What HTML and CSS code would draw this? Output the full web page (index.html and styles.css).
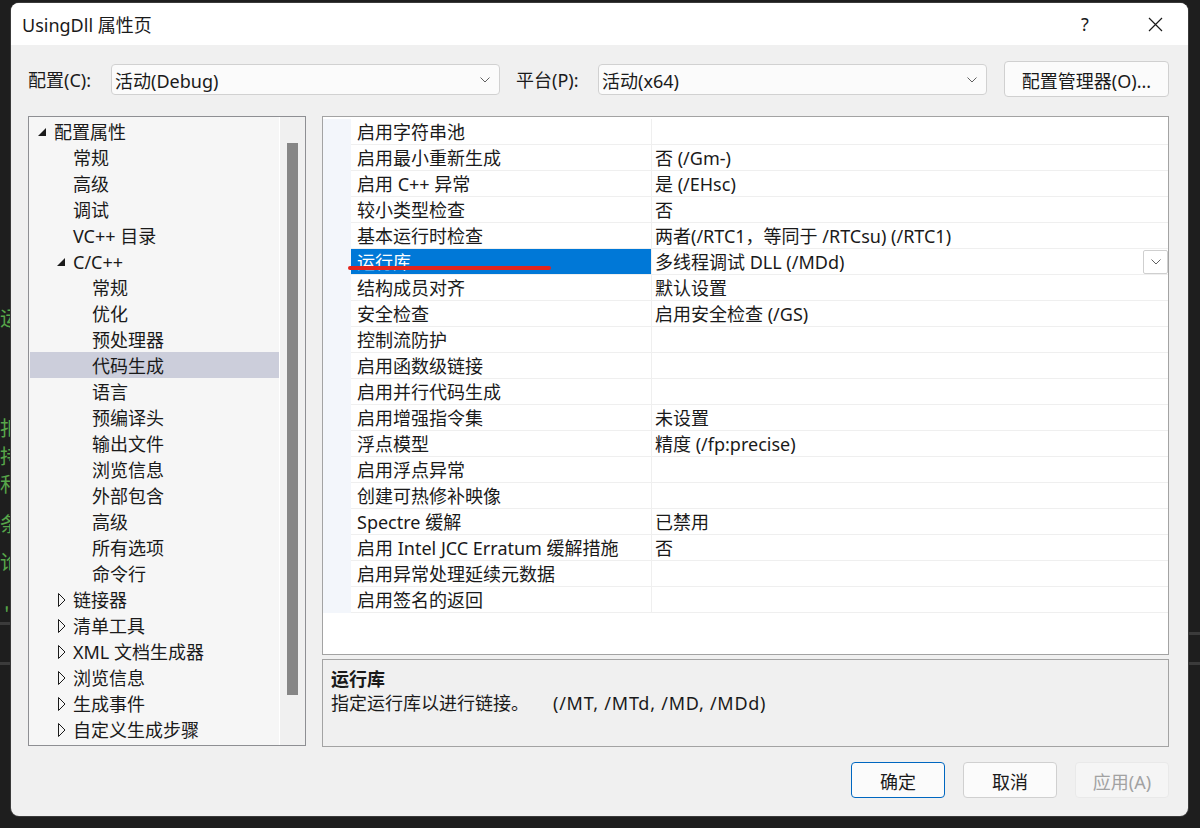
FILE: index.html
```html
<!DOCTYPE html>
<html lang="zh-CN">
<head>
<meta charset="utf-8">
<title>UsingDll 属性页</title>
<link rel="stylesheet" href="styles.css">
</head>
<body>
<div class="backdrop">
  <span class="glyph g1">“</span>
  <span class="glyph g2">运</span>
  <span class="glyph g3">扣</span>
  <span class="glyph g4">持</span>
  <span class="glyph g5">和</span>
  <span class="glyph g6">条</span>
  <span class="glyph g7">论</span>
  <span class="glyph g8">'</span>
  <span class="rule r1"></span>
  <span class="rule r2"></span>
  <span class="rule r3"></span>
  <span class="rule r4"></span>
</div>
<div class="dialog">
  <div class="titlebar">
    <span class="title">UsingDll 属性页</span>
    <span class="tb-btn tb-help">?</span>
    <span class="tb-btn tb-close">
      <svg width="15" height="15" viewBox="0 0 15 15"><path d="M1 1 L14 14 M14 1 L1 14" stroke="#1a1a1a" stroke-width="1.2" fill="none"/></svg>
    </span>
  </div>
  <div class="content">
    <div class="config-row">
      <span class="cfg-label">配置(C):</span>
      <div class="combo"><span>活动(Debug)</span><svg class="chev" width="10" height="6" viewBox="0 0 10 6"><path d="M0.5 0.5 L5 5 L9.5 0.5" stroke="#606060" stroke-width="1" fill="none"/></svg></div>
      <span class="cfg-label cfg-label2">平台(P):</span>
      <div class="combo"><span>活动(x64)</span><svg class="chev" width="10" height="6" viewBox="0 0 10 6"><path d="M0.5 0.5 L5 5 L9.5 0.5" stroke="#606060" stroke-width="1" fill="none"/></svg></div>
      <button class="btn btn-manager">配置管理器(O)...</button>
    </div>
    <div class="main">
      <div class="tree">
        <div class="tree-list">
          <div class="tree-item l0"><span class="twisty"><svg width="10" height="10" viewBox="0 0 10 10"><polygon points="9,1 9,9 1,9" fill="#1a1a1a"/></svg></span>配置属性</div>
          <div class="tree-item l1"><span class="twisty"></span>常规</div>
          <div class="tree-item l1"><span class="twisty"></span>高级</div>
          <div class="tree-item l1"><span class="twisty"></span>调试</div>
          <div class="tree-item l1"><span class="twisty"></span>VC++ 目录</div>
          <div class="tree-item l1"><span class="twisty"><svg width="10" height="10" viewBox="0 0 10 10"><polygon points="9,1 9,9 1,9" fill="#1a1a1a"/></svg></span>C/C++</div>
          <div class="tree-item l2"><span class="twisty"></span>常规</div>
          <div class="tree-item l2"><span class="twisty"></span>优化</div>
          <div class="tree-item l2"><span class="twisty"></span>预处理器</div>
          <div class="tree-item l2 sel"><span class="twisty"></span>代码生成</div>
          <div class="tree-item l2"><span class="twisty"></span>语言</div>
          <div class="tree-item l2"><span class="twisty"></span>预编译头</div>
          <div class="tree-item l2"><span class="twisty"></span>输出文件</div>
          <div class="tree-item l2"><span class="twisty"></span>浏览信息</div>
          <div class="tree-item l2"><span class="twisty"></span>外部包含</div>
          <div class="tree-item l2"><span class="twisty"></span>高级</div>
          <div class="tree-item l2"><span class="twisty"></span>所有选项</div>
          <div class="tree-item l2"><span class="twisty"></span>命令行</div>
          <div class="tree-item l1"><span class="twisty"><svg width="10" height="14" viewBox="0 0 10 14"><polygon points="2.5,0.5 9,7 2.5,13.5" fill="none" stroke="#1a1a1a" stroke-width="1"/></svg></span>链接器</div>
          <div class="tree-item l1"><span class="twisty"><svg width="10" height="14" viewBox="0 0 10 14"><polygon points="2.5,0.5 9,7 2.5,13.5" fill="none" stroke="#1a1a1a" stroke-width="1"/></svg></span>清单工具</div>
          <div class="tree-item l1"><span class="twisty"><svg width="10" height="14" viewBox="0 0 10 14"><polygon points="2.5,0.5 9,7 2.5,13.5" fill="none" stroke="#1a1a1a" stroke-width="1"/></svg></span>XML 文档生成器</div>
          <div class="tree-item l1"><span class="twisty"><svg width="10" height="14" viewBox="0 0 10 14"><polygon points="2.5,0.5 9,7 2.5,13.5" fill="none" stroke="#1a1a1a" stroke-width="1"/></svg></span>浏览信息</div>
          <div class="tree-item l1"><span class="twisty"><svg width="10" height="14" viewBox="0 0 10 14"><polygon points="2.5,0.5 9,7 2.5,13.5" fill="none" stroke="#1a1a1a" stroke-width="1"/></svg></span>生成事件</div>
          <div class="tree-item l1"><span class="twisty"><svg width="10" height="14" viewBox="0 0 10 14"><polygon points="2.5,0.5 9,7 2.5,13.5" fill="none" stroke="#1a1a1a" stroke-width="1"/></svg></span>自定义生成步骤</div>
        </div>
        <div class="scroll"><div class="thumb"></div></div>
      </div>
      <div class="right">
        <div class="grid">
          <div class="prow"><span class="pm"></span><span class="pn">启用字符串池</span><span class="pv"></span></div>
          <div class="prow"><span class="pm"></span><span class="pn">启用最小重新生成</span><span class="pv">否 (/Gm-)</span></div>
          <div class="prow"><span class="pm"></span><span class="pn">启用 C++ 异常</span><span class="pv">是 (/EHsc)</span></div>
          <div class="prow"><span class="pm"></span><span class="pn">较小类型检查</span><span class="pv">否</span></div>
          <div class="prow"><span class="pm"></span><span class="pn">基本运行时检查</span><span class="pv">两者(/RTC1，等同于 /RTCsu) (/RTC1)</span></div>
          <div class="prow sel"><span class="pm"></span><span class="pn">运行库</span><span class="pv">多线程调试 DLL (/MDd)<span class="dd"><svg width="10" height="6" viewBox="0 0 10 6"><path d="M0.5 0.5 L5 5 L9.5 0.5" stroke="#606060" stroke-width="1" fill="none"/></svg></span></span></div>
          <div class="prow"><span class="pm"></span><span class="pn">结构成员对齐</span><span class="pv">默认设置</span></div>
          <div class="prow"><span class="pm"></span><span class="pn">安全检查</span><span class="pv">启用安全检查 (/GS)</span></div>
          <div class="prow"><span class="pm"></span><span class="pn">控制流防护</span><span class="pv"></span></div>
          <div class="prow"><span class="pm"></span><span class="pn">启用函数级链接</span><span class="pv"></span></div>
          <div class="prow"><span class="pm"></span><span class="pn">启用并行代码生成</span><span class="pv"></span></div>
          <div class="prow"><span class="pm"></span><span class="pn">启用增强指令集</span><span class="pv">未设置</span></div>
          <div class="prow"><span class="pm"></span><span class="pn">浮点模型</span><span class="pv">精度 (/fp:precise)</span></div>
          <div class="prow"><span class="pm"></span><span class="pn">启用浮点异常</span><span class="pv"></span></div>
          <div class="prow"><span class="pm"></span><span class="pn">创建可热修补映像</span><span class="pv"></span></div>
          <div class="prow"><span class="pm"></span><span class="pn">Spectre 缓解</span><span class="pv">已禁用</span></div>
          <div class="prow"><span class="pm"></span><span class="pn">启用 Intel JCC Erratum 缓解措施</span><span class="pv">否</span></div>
          <div class="prow"><span class="pm"></span><span class="pn">启用异常处理延续元数据</span><span class="pv"></span></div>
          <div class="prow"><span class="pm"></span><span class="pn">启用签名的返回</span><span class="pv"></span></div>
          <span class="redline"></span>
        </div>
        <div class="desc">
          <div class="desc-title">运行库</div>
          <div class="desc-text">指定运行库以进行链接。<span class="flags">(/MT, /MTd, /MD, /MDd)</span></div>
        </div>
      </div>
    </div>
    <div class="buttons">
      <button class="btn btn-dlg btn-ok">确定</button>
      <button class="btn btn-dlg">取消</button>
      <button class="btn btn-dlg btn-disabled">应用(A)</button>
    </div>
  </div>
</div>
</body>
</html>
```
FILE: styles.css
```css
* { box-sizing: border-box; }
html, body { margin: 0; padding: 0; }
body {
  width: 1200px;
  height: 828px;
  overflow: hidden;
  background: #1e1e1e;
  padding: 3px 0 0 11px;
  position: relative;
  font-family: "Noto Sans", "Noto Sans CJK SC", sans-serif;
  font-size: 18px;
  color: #1a1a1a;
}

/* desktop behind the dialog */
.backdrop { position: absolute; left: 0; top: 0; width: 1200px; height: 828px; }
.glyph {
  position: absolute;
  color: #57a64a;
  font-family: "Noto Sans CJK SC", sans-serif;
  font-size: 20px;
  line-height: 1;
  left: 0;
}
.g1 { top: 268px; left: 1px; }
.g2 { top: 308px; }
.g3 { top: 418px; }
.g4 { top: 446px; }
.g5 { top: 474px; }
.g6 { top: 514px; }
.g7 { top: 552px; }
.g8 { top: 606px; left: 4px; }
.rule { position: absolute; height: 3px; background: #3b3b3b; }
.r1 { left: 0; width: 12px; top: 622px; }
.r2 { left: 0; width: 12px; top: 662px; }
.r3 { left: 1188px; width: 12px; top: 632px; }
.r4 { left: 1188px; width: 12px; top: 662px; }

.dialog {
  position: relative;
  width: 1177px;
  height: 813px;
  background: #f0f0f0;
  border-radius: 8px;
  overflow: hidden;
  display: flex;
  flex-direction: column;
  box-shadow: 0 0 0 1px #3a3a3a;
}

.titlebar {
  flex: none;
  height: 42px;
  background: #ffffff;
  display: flex;
  align-items: center;
  padding: 0 10px 0 11px;
}
.title { flex: 1; font-size: 18px; }
.tb-btn {
  width: 46px;
  height: 42px;
  display: flex;
  align-items: center;
  justify-content: center;
}
.tb-help { margin-right: 24px; font-size: 18px; color: #1a1a1a; }

.content {
  flex: 1;
  display: flex;
  flex-direction: column;
  padding: 16px 19px 18px 17px;
}

.config-row {
  flex: none;
  display: flex;
  align-items: center;
  height: 36px;
}
.cfg-label { width: 83px; line-height: 24px; padding-top: 1px; }
.cfg-label2 { width: 82px; margin-left: 16px; }
.combo {
  width: 389px;
  height: 31px;
  background: #fbfbfb;
  border: 1px solid #d1d1d1;
  border-radius: 4px;
  display: flex;
  align-items: center;
  justify-content: space-between;
  padding: 1px 9px 0 3px;
}
.btn {
  height: 36px;
  border: 1px solid #d0d0d0;
  border-radius: 4px;
  background: #fbfbfb;
  font: inherit;
  color: inherit;
  display: flex;
  align-items: center;
  justify-content: center;
  padding: 1px 0 0;
}
.btn-manager { width: 165px; margin-left: 17px; }

.main {
  flex: none;
  display: flex;
  gap: 16px;
  margin-top: 19px;
  height: 631px;
}

.tree {
  width: 278px;
  height: 630px;
  border: 1px solid #8e8f93;
  background: #f0f0f0;
  display: flex;
}
.tree-list {
  width: 251px;
  background: #f6f6f6;
  border-right: 1px solid #ffffff;
  padding: 1px 0 0 1px;
}
.tree-item {
  height: 26px;
  display: flex;
  align-items: center;
  white-space: nowrap;
  line-height: 24px;
  padding-top: 2px;
}
.tree-item.sel { background: #cccedb; }
.l0 { padding-left: 7px; }
.l1 { padding-left: 26px; }
.l2 { padding-left: 45px; }
.twisty {
  flex: none;
  width: 10px;
  height: 14px;
  margin-right: 7px;
  display: flex;
  align-items: center;
}
.scroll { flex: 1; }
.thumb {
  margin: 26px 0 0 7px;
  width: 11px;
  height: 552px;
  background: #868686;
}

.right {
  width: 847px;
  display: flex;
  flex-direction: column;
  gap: 4px;
}
.grid {
  position: relative;
  height: 539px;
  border: 1px solid #a3a3a3;
  background: #ffffff;
  padding-top: 2px;
}
.prow {
  display: grid;
  grid-template-columns: 28px 301px 1fr;
  height: 26px;
}
.pm { background: #f3f6fb; }
.pn {
  border-bottom: 1px solid #efefef;
  border-right: 1px solid #efefef;
  padding: 1px 0 0 6px;
  line-height: 24px;
  white-space: nowrap;
}
.pv {
  position: relative;
  border-bottom: 1px solid #efefef;
  padding: 1px 0 0 3px;
  line-height: 24px;
  white-space: nowrap;
}
.prow.sel .pn { background: #0078d7; color: #ffffff; }
.dd {
  position: absolute;
  right: 0;
  top: 1px;
  width: 25px;
  height: 24px;
  border: 1px solid #cfcfcf;
  border-radius: 2px;
  background: #ffffff;
  display: flex;
  align-items: center;
  justify-content: center;
}
.redline {
  position: absolute;
  left: 25px;
  top: 149px;
  width: 203px;
  height: 4px;
  border-radius: 2px;
  background: #e3241c;
}

.desc {
  height: 88px;
  border: 1px solid #a3a3a3;
  background: #f0f0f0;
  padding: 7px 8px;
  line-height: 24px;
}
.desc-title { font-weight: bold; }
.flags { margin-left: 24px; letter-spacing: 0.75px; }

.buttons {
  flex: none;
  display: flex;
  justify-content: flex-end;
  gap: 18px;
  margin-top: 15px;
}
.btn-dlg { width: 94px; }
.btn-ok { border-color: #0067c0; }
.btn-disabled { background: #f5f5f5; border-color: #e9e9e9; color: #a2a2a2; }
```
